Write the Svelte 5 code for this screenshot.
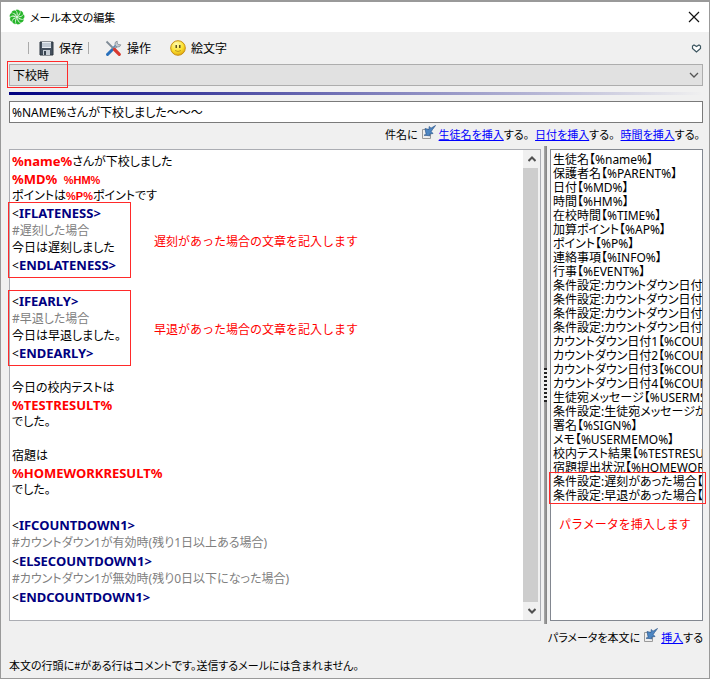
<script lang="ts">
  type Part = { text: string; kind?: 'param' | 'small' | 'tag' | 'comment' };
  type Line = Part[];

  const tag = (name: string): Line => [{ text: '<' }, { text: name + '>', kind: 'tag' }];
  const param = (text: string): Line => [{ text, kind: 'param' }];
  const comment = (text: string): Line => [{ text, kind: 'comment' }];
  const plain = (text: string): Line => [{ text }];

  let subject = $state('%NAME%さんが下校しました～～～');
  let template = $state('下校時');

  const blocks: { lines: Line[]; note?: string }[] = [
    {
      lines: [
        [{ text: '%name%', kind: 'param' }, { text: 'さんが下校しました' }],
        [{ text: '%MD% ', kind: 'param' }, { text: ' %HM%', kind: 'small' }],
        [{ text: 'ポイントは' }, { text: '%P%', kind: 'small' }, { text: 'ポイントです' }],
      ],
    },
    {
      note: '遅刻があった場合の文章を記入します',
      lines: [tag('IFLATENESS'), comment('#遅刻した場合'), plain('今日は遅刻しました'), tag('ENDLATENESS')],
    },
    { lines: [[]] },
    {
      note: '早退があった場合の文章を記入します',
      lines: [tag('IFEARLY'), comment('#早退した場合'), plain('今日は早退しました。'), tag('ENDEARLY')],
    },
    {
      lines: [
        [],
        plain('今日の校内テストは'),
        param('%TESTRESULT%'),
        plain('でした。'),
        [],
        plain('宿題は'),
        param('%HOMEWORKRESULT%'),
        plain('でした。'),
        [],
        tag('IFCOUNTDOWN1'),
        comment('#カウントダウン1が有効時(残り1日以上ある場合)'),
        tag('ELSECOUNTDOWN1'),
        comment('#カウントダウン1が無効時(残り0日以下になった場合)'),
        tag('ENDCOUNTDOWN1'),
      ],
    },
  ];

  const params = [
    '生徒名【%name%】',
    '保護者名【%PARENT%】',
    '日付【%MD%】',
    '時間【%HM%】',
    '在校時間【%TIME%】',
    '加算ポイント【%AP%】',
    'ポイント【%P%】',
    '連絡事項【%INFO%】',
    '行事【%EVENT%】',
    '条件設定:カウントダウン日付1【<IFCOUNTDOWN1>】',
    '条件設定:カウントダウン日付2【<IFCOUNTDOWN2>】',
    '条件設定:カウントダウン日付3【<IFCOUNTDOWN3>】',
    '条件設定:カウントダウン日付4【<IFCOUNTDOWN4>】',
    'カウントダウン日付1【%COUNTDOWN1%】',
    'カウントダウン日付2【%COUNTDOWN2%】',
    'カウントダウン日付3【%COUNTDOWN3%】',
    'カウントダウン日付4【%COUNTDOWN4%】',
    '生徒宛メッセージ【%USERMSG%】',
    '条件設定:生徒宛メッセージがある場合【<IFUSERMSG>】',
    '署名【%SIGN%】',
    'メモ【%USERMEMO%】',
    '校内テスト結果【%TESTRESULT%】',
    '宿題提出状況【%HOMEWORKRESULT%】',
    '条件設定:遅刻があった場合【<IFLATENESS>】',
    '条件設定:早退があった場合【<IFEARLY>】',
  ];

  // plain Japanese lines sit a little tighter than lines with Latin text
  const isTight = (line: Line) => line.length > 0 && !['<', '#', '%'].includes(line[0].text[0]);
</script>

{#snippet insertIcon()}
  <svg class="insert-icon" width="15" height="15" viewBox="0 0 15 15" aria-hidden="true">
    <path d="M1.5 4.5h8v9h-8z" fill="#eee" stroke="#999" />
    <path d="M14.5 .5 10 3.2 8.2 1.5 8 4.5 4 3.5 5.2 9.5 3 10.2 9 10.8 8.6 9 12 8.5 10.2 6.5 11.5 4.5z" fill="#4d86c2" stroke="#2b568c" stroke-width=".7" />
  </svg>
{/snippet}

<div class="window">
  <header class="titlebar">
    <svg width="16" height="16" viewBox="-8 -8 16 16" aria-hidden="true">
      {#each [0, 40, 80, 120, 160, 200, 240, 280, 320] as angle}
        <path d="M0-1C1.6-3 .6-5-1.2-7C.8-8 3-6.8 3-5.2C2.8-3.6 1.6-2 0-1" fill="#27b52b" stroke="#27b52b" stroke-width=".2" transform="rotate({angle})" />
      {/each}
    </svg>
    <h1>メール本文の編集</h1>
    <button class="close" aria-label="閉じる">
      <svg width="12" height="12" viewBox="0 0 12 12"><path d="M1 1l10 10M11 1 1 11" stroke="#111" stroke-width="1.2" /></svg>
    </button>
  </header>

  <div class="toolbar">
    <span class="sep"></span>
    <button class="save">
      <svg width="15" height="15" viewBox="0 0 15 15">
        <path d="M1 1h13v13H1z" fill="#44505e" stroke="#2d3741" />
        <path d="M3 1h9v6H3z" fill="#e8edf2" />
        <path d="M3 3h9M3 5h9" stroke="#9aa8b7" />
        <path d="M4 9h7v5H4z" fill="#c5ccd4" />
        <path d="M5 10h2v4H5z" fill="#38434f" />
      </svg>
      保存
    </button>
    <span class="sep"></span>
    <button class="tools">
      <svg width="17" height="17" viewBox="0 0 17 17">
        <path d="M2.5 14.5 12 5" stroke="#2870bc" stroke-width="3" stroke-linecap="round" />
        <path d="M9.5 8 13 4.5" stroke="#98a4ae" stroke-width="2.2" />
        <path d="M15.8 4.8a3 3 0 1 1-3.6-3.7v2.3l1.5 1.2z" fill="#c5ccd2" stroke="#78838d" stroke-width=".7" />
        <path d="M1.5 1.5 9.5 9.5" stroke="#7f8b96" stroke-width="1.8" />
        <path d="M9.5 9.5l4.8 4.8" stroke="#d93a30" stroke-width="3.2" stroke-linecap="round" />
      </svg>
      操作
    </button>
    <button class="emoji">
      <svg width="16" height="16" viewBox="0 0 16 16">
        <defs>
          <radialGradient id="face" cx=".4" cy=".25" r=".8">
            <stop offset="0" stop-color="#fffbb0" />
            <stop offset=".6" stop-color="#fbe02a" />
            <stop offset="1" stop-color="#dda010" />
          </radialGradient>
        </defs>
        <circle cx="8" cy="8" r="7.3" fill="url(#face)" stroke="#c88f12" />
        <path d="M6.2 5v3M9.8 5v3" stroke="#46380c" stroke-width="1.3" />
        <path d="M5 10.5q3 2 6 0" fill="none" stroke="#c09a20" />
      </svg>
      絵文字
    </button>
    <button class="favorite" aria-label="お気に入り">
      <svg width="11" height="9" viewBox="0 0 11 9"><path d="M5.5 8 1.5 4.5V2L3 1l2.5 1.5L8 1l1.5 1v2.5z" fill="#fff" stroke="#3d5660" stroke-width="1.2" /></svg>
    </button>
  </div>

  <main>
    <div class="template">
      <select aria-label="テンプレート" bind:value={template}>
        <option>下校時</option>
      </select>
      <svg class="arrow" width="10" height="6" viewBox="0 0 10 6"><path d="M1 1l4 4 4-4" fill="none" stroke="#555" stroke-width="1.3" /></svg>
      <span class="frame"></span>
    </div>
    <div class="rule"></div>
    <input class="subject" type="text" aria-label="件名" bind:value={subject} />

    <p class="insert-row top">
      件名に{@render insertIcon()}<a href="#name">生徒名を挿入</a>する。<a href="#date">日付を挿入</a>する。<a href="#time">時間を挿入</a>する。
    </p>

    <div class="workspace">
      <div class="editor">
        <div class="body" role="textbox" aria-multiline="true" aria-label="本文" tabindex="0">
          {#each blocks as block}
            <div class="block">
              {#each block.lines as line}
                <div class="line" class:tight={isTight(line)}>
                  {#each line as part}<span class={part.kind}>{part.text}</span>{/each}
                </div>
              {/each}
              {#if block.note}
                <span class="frame"></span>
                <span class="note">{block.note}</span>
              {/if}
            </div>
          {/each}
        </div>
        <div class="scrollbar">
          <button aria-label="上へ"><svg width="8" height="6" viewBox="0 0 8 6"><path d="M.5 5 4 1.5 7.5 5" fill="none" stroke="#505050" stroke-width="2" /></svg></button>
          <div class="thumb"></div>
          <button aria-label="下へ"><svg width="8" height="6" viewBox="0 0 8 6"><path d="M.5 1 4 4.5 7.5 1" fill="none" stroke="#505050" stroke-width="2" /></svg></button>
        </div>
      </div>
      <div class="splitter"><span class="grip"></span></div>
      <div class="params">
        <select size="25" aria-label="パラメータ">
          {#each params as item}
            <option>{item}</option>
          {/each}
        </select>
        <div class="callout">
          <span class="frame"></span>
          <span class="note">パラメータを挿入します</span>
        </div>
      </div>
    </div>

    <p class="insert-row bottom">
      パラメータを本文に{@render insertIcon()}<a href="#param">挿入</a>する
    </p>
    <p class="hint">本文の行頭に#がある行はコメントです。送信するメールには含まれません。</p>
  </main>
</div>

<style>
  :global(body) {
    background: #fff;
  }

  .window {
    display: flex;
    flex-direction: column;
    box-sizing: border-box;
    min-height: 100vh;
    border: 1px solid #999;
    border-top-width: 2px;
    background: #f0f0f0;
    color: #000;
    font: 12px/16px 'Noto Sans CJK JP', sans-serif;
    font-feature-settings: 'palt';
  }

  button,
  input,
  select {
    margin: 0;
    padding: 0;
    border: 0;
    border-radius: 0;
    background: none;
    color: inherit;
    font: inherit;
    font-feature-settings: inherit;
    outline: 0;
  }

  p,
  h1 {
    margin: 0;
    font: inherit;
    font-size: 11px;
  }

  svg {
    display: block;
  }

  .titlebar {
    display: flex;
    align-items: center;
    gap: 5px;
    height: 30px;
    padding: 0 9px 0 8px;
    background: #fff;
  }

  .close {
    margin-left: auto;
  }

  .toolbar {
    display: flex;
    align-items: center;
    height: 32px;
    padding: 0 7px 0 27px;
  }

  .toolbar button {
    display: flex;
    align-items: center;
    gap: 5px;
  }

  .sep {
    width: 1px;
    height: 12px;
    background: #aaa;
  }

  .save {
    margin: 0 5px 0 10px;
  }

  .tools {
    margin-left: 16px;
  }

  .emoji {
    margin-left: 19px;
  }

  .toolbar .favorite {
    margin-left: auto;
  }

  main {
    display: flex;
    flex: 1;
    flex-direction: column;
    padding: 0 6px 0 8px;
  }

  .template {
    position: relative;
  }

  .template select {
    display: block;
    width: 100%;
    height: 22px;
    padding-left: 3px;
    border: 1px solid #adadad;
    background: #e1e1e1;
    appearance: none;
  }

  .arrow {
    position: absolute;
    top: 8px;
    right: 4px;
    pointer-events: none;
  }

  .frame {
    position: absolute;
    box-sizing: border-box;
    border: 1px solid #ff2a2a;
    pointer-events: none;
  }

  .template .frame {
    top: -3px;
    left: -2px;
    width: 61px;
    height: 27px;
  }

  .rule {
    height: 3px;
    margin: 6px 0;
    background: linear-gradient(to right, #000080, #f0f0f0);
  }

  .subject {
    box-sizing: border-box;
    width: 100%;
    height: 22px;
    padding: 0 2px;
    border: 1px solid #7a7a7a;
    background: #fff;
    font-family: 'Noto Sans', 'Noto Sans CJK JP', sans-serif;
  }

  .insert-row {
    display: flex;
    align-items: center;
    justify-content: flex-end;
  }

  .insert-row a {
    margin-left: 3px;
    color: #00f;
  }

  .insert-row a + a {
    margin-left: 6px;
  }

  .insert-icon {
    margin: 0 0 4px 3px;
  }

  .top {
    height: 22px;
    padding: 0 3px 4px 0;
  }

  .workspace {
    display: grid;
    flex: 1;
    grid-template-columns: minmax(0, 1fr) 3px 153px;
    column-gap: 3px;
  }

  .editor {
    display: flex;
    border: 1px solid #abadb3;
    background: #fff;
  }

  .body {
    flex: 1;
    padding: 2px;
    outline: 0;
    font-family: 'Noto Sans', 'Noto Sans CJK JP', sans-serif;
  }

  .block {
    position: relative;
  }

  .line {
    height: 18px;
    line-height: 18px;
    white-space: pre;
  }

  .line.tight {
    height: 16px;
    line-height: 16px;
  }

  .param,
  .tag {
    font-size: 13px;
    font-weight: 700;
  }

  .param {
    color: #f00;
  }

  .tag {
    color: #000080;
  }

  .small {
    color: #f00;
    font-family: 'Liberation Sans', sans-serif;
    font-size: 11px;
    font-weight: 700;
  }

  .comment {
    color: #808080;
  }

  .block .frame {
    top: -2px;
    left: -4px;
    width: 123px;
    height: 76px;
  }

  .note {
    position: absolute;
    color: #f00;
    font: 12px/16px 'Noto Sans CJK JP', sans-serif;
    font-feature-settings: normal;
    white-space: nowrap;
  }

  .block .note {
    top: 29px;
    left: 142px;
  }

  .scrollbar {
    display: flex;
    flex-direction: column;
    width: 17px;
    background: #f0f0f0;
  }

  .scrollbar button {
    display: flex;
    align-items: center;
    justify-content: center;
    height: 18px;
  }

  .thumb {
    flex: 1;
    margin-right: 2px;
    background: #cdcdcd;
  }

  .splitter {
    display: flex;
    align-items: center;
    margin: -3px 0;
    background: linear-gradient(to right, #aaa, #808080);
  }

  .grip {
    width: 3px;
    height: 34px;
    background: repeating-linear-gradient(#222 0 2px, #f0f0f0 2px 4px);
  }

  .params {
    position: relative;
    display: flex;
    border: 1px solid #828790;
    background: #fff;
  }

  .params select {
    width: 100%;
    padding: 0 0 0 2px;
    overflow: hidden;
    font-family: 'Noto Sans', 'Noto Sans CJK JP', sans-serif;
  }

  .params option {
    height: 14px;
    min-height: 0;
    padding: 0;
    overflow: visible;
    line-height: 14px;
    font-feature-settings: 'palt';
  }

  .callout {
    position: absolute;
    top: 322px;
    left: -2px;
    width: 157px;
    height: 32px;
    pointer-events: none;
  }

  .callout .frame {
    inset: 0;
  }

  .callout .note {
    top: 44px;
    left: 10px;
  }

  .bottom {
    height: 32px;
    padding-bottom: 2px;
  }

  .hint {
    padding: 2px 0 5px;
  }
</style>
